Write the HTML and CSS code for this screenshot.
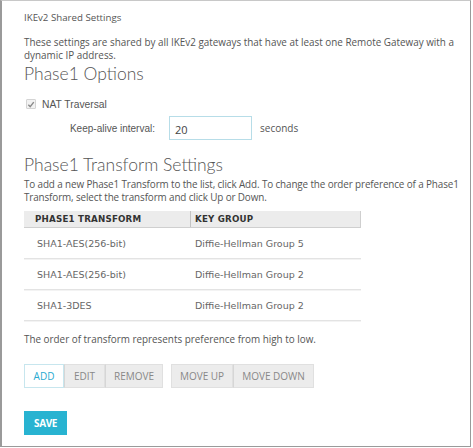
FILE: index.html
```html
<!DOCTYPE html>
<html>
<head>
<meta charset="utf-8">
<link rel="stylesheet" href="styles.css">
</head>
<body>
<div class="frame">
  <div class="title">IKEv2 Shared Settings</div>
  <p class="desc desc1">These settings are shared by all IKEv2 gateways that have at least one Remote Gateway with a dynamic IP address.</p>
  <h2 class="heading h-opts">Phase1 Options</h2>
  <label class="check-row">
    <span class="checkbox"><svg width="9" height="9" viewBox="0 0 9 9"><path d="M1.5 4.8 L3.6 7 L7.6 1.8" fill="none" stroke="#8a8a8a" stroke-width="1.6"/></svg></span>
    <span>NAT Traversal</span>
  </label>
  <div class="field-row">
    <span class="field-label">Keep-alive interval:</span>
    <span class="input">20</span>
    <span class="unit">seconds</span>
  </div>
  <h2 class="heading h-trans">Phase1 Transform Settings</h2>
  <p class="desc desc2">To add a new Phase1 Transform to the list, click Add. To change the order preference of a Phase1 Transform, select the transform and click Up or Down.</p>
  <div class="table">
    <div class="thead">
      <div class="th c1">PHASE1 TRANSFORM</div>
      <div class="th c2">KEY GROUP</div>
    </div>
    <div class="tr"><div class="td c1">SHA1-AES(256-bit)</div><div class="td c2">Diffie-Hellman Group 5</div></div>
    <div class="tr"><div class="td c1">SHA1-AES(256-bit)</div><div class="td c2">Diffie-Hellman Group 2</div></div>
    <div class="tr"><div class="td c1">SHA1-3DES</div><div class="td c2">Diffie-Hellman Group 2</div></div>
  </div>
  <p class="desc note">The order of transform represents preference from high to low.</p>
  <div class="btn-bar">
    <div class="group">
      <span class="btn active b-add">ADD</span><span class="btn b-edit">EDIT</span><span class="btn b-remove">REMOVE</span>
    </div>
    <div class="group">
      <span class="btn b-up">MOVE UP</span><span class="btn b-down">MOVE DOWN</span>
    </div>
  </div>
  <div class="save-row"><span class="save">SAVE</span></div>
</div>
</body>
</html>
```
FILE: styles.css
```css
* { box-sizing: border-box; }
html, body { margin: 0; padding: 0; background: #fff; }
body { width: 473px; height: 448px; }
.frame {
  width: 471px;
  height: 447px;
  border: 1px solid #9a9a9a;
  border-top-color: #c8c8c8;
  border-left: 2px solid #9a9a9a;
  padding: 10px 0 0 22px;
  font-family: "Open Sans", sans-serif;
  color: #555;
  font-size: 10px;
}
.title { font-size: 9.7px; line-height: 14px; color: #555; }
.desc { margin: 0; line-height: 13px; font-size: 9.9px; color: #555; }
.desc1 { margin-top: 11px; width: 440px; }
.heading {
  margin: 0;
  font-family: "Lato", sans-serif;
  font-weight: 300;
  font-size: 17.5px;
  color: #555;
  line-height: 22px;
}
.h-opts { margin-top: 1px; }
.check-row {
  display: flex;
  align-items: center;
  margin-top: 12px;
  margin-left: 2px;
  font-family: "Liberation Sans", sans-serif;
  font-size: 10.3px;
  color: #555;
  height: 14px;
}
.checkbox {
  width: 10px; height: 10px;
  border: 1px solid #d4d4d4;
  background: #f2f2f2;
  display: inline-flex;
  align-items: center;
  justify-content: center;
  margin-right: 6px;
  border-radius: 1px;
}
.field-row {
  display: flex;
  align-items: center;
  margin-top: 5px;
  font-family: "Liberation Sans", sans-serif;
  font-size: 10px;
  color: #555;
}
.field-label { width: 131px; text-align: right; }
.input {
  margin-left: 14px;
  width: 83px;
  height: 24px;
  border: 1px solid #b7dde8;
  padding: 5px 0 0 5px;
  font-family: "Open Sans", sans-serif;
  font-size: 11px;
  color: #444;
}
.unit { margin-left: 8px; font-family: "Open Sans", sans-serif; font-size: 10px; }
.h-trans { margin-top: 14px; }
.desc2 { margin-top: 2px; width: 446px; letter-spacing: -0.12px; }
.table { width: 337px; margin-top: 7px; font-family: "DejaVu Sans", Verdana, sans-serif; }
.thead {
  display: flex;
  height: 17px;
  background: #ececec;
  border-bottom: 1px solid #cfcfcf;
  border-right: 1px solid #cfcfcf;
  align-items: center;
}
.th { font-size: 8.7px; font-weight: bold; color: #333; letter-spacing: 0.2px; }
.c1 { width: 167px; padding-left: 11px; height: 100%; display: flex; align-items: center; }
.td.c1 { padding-left: 13px; }
.thead .c1 { border-right: 1px solid #c4c4c4; }
.c2 { padding-left: 4px; }
.tr {
  display: flex;
  height: 31px;
  align-items: center;
  border-bottom: 1px solid #e3e3e3;
  box-shadow: 0 1px 0 #f3f3f3;
}
.td { font-size: 9.5px; color: #666; }
.note { margin-top: 12px; }
.btn-bar { display: flex; gap: 8px; margin-top: 18px; }
.group { display: flex; }
.btn {
  height: 24px;
  display: inline-flex;
  align-items: center;
  justify-content: center;
  background: #ececec;
  border: 1px solid #e0e0e0;
  color: #888;
  font-size: 10px;
  font-family: "Open Sans", sans-serif;
}
.btn + .btn { border-left: 1px solid #d6d6d6; }
.btn.active { background: #fff; border: 1px solid #c7e6ee; color: #2aaad0; }
.b-add { width: 40px; }
.b-edit { width: 41px; }
.b-remove { width: 58px; }
.b-up { width: 62px; }
.b-down { width: 81px; }
.save-row { margin-top: 23px; }
.save {
  display: inline-flex;
  align-items: center;
  justify-content: center;
  width: 43px;
  height: 24px;
  background: #28b3d1;
  color: #fff;
  font-weight: bold;
  font-size: 10px;
  letter-spacing: -0.4px;
}
```
